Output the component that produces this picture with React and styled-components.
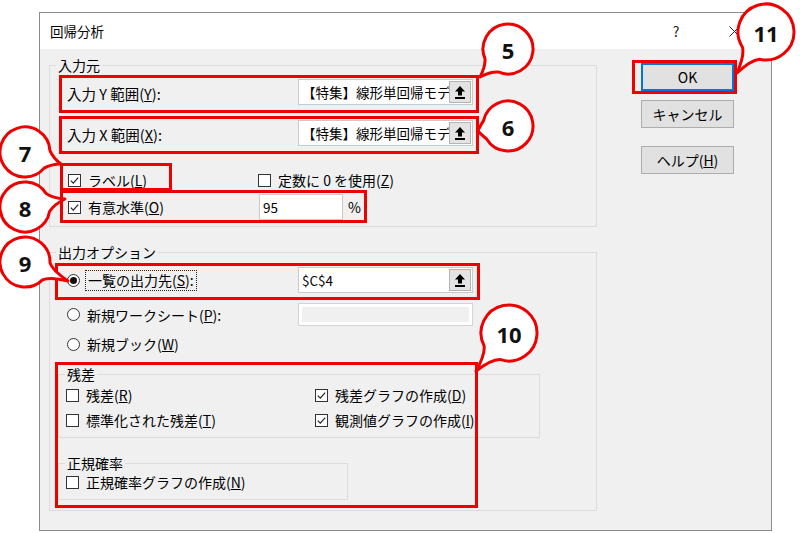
import React from 'react';
import styled, { createGlobalStyle } from 'styled-components';

const Global = createGlobalStyle`
  html, body { margin: 0; padding: 0; background: #fff; }
  body {
    font-family: "Noto Sans CJK JP", "Noto Sans", sans-serif;
    font-size: 14px;
    color: #000;
  }
  #root { position: relative; width: 800px; height: 533px; overflow: hidden; }
`;

const Page = styled.div`
  padding: 12px 0 0 39px;
`;

const Dialog = styled.div`
  width: 733px;
  height: 519px;
  box-sizing: border-box;
  border: 1px solid #8c8c8c;
  background: #f0f0f0;
  display: flex;
  flex-direction: column;
`;

const TitleBar = styled.div`
  height: 36px;
  flex: none;
  background: #fff;
  display: flex;
  align-items: center;
  padding-left: 10px;
  font-size: 13.5px;
`;

const TitleTools = styled.div`
  margin-left: auto;
  display: flex;
  gap: 12px;
  padding-right: 14px;
`;

const ToolGlyph = styled.span`
  width: 46px;
  display: flex;
  align-items: center;
  justify-content: center;
  font-size: 14px;
  color: #222;
`;

const Body = styled.div`
  flex: 1;
  display: flex;
  padding: 7px 0 0 9px;
`;

const LeftCol = styled.div`
  width: 548px;
  display: flex;
  flex-direction: column;
`;

const RightCol = styled.div`
  margin-left: 44px;
  padding-top: 7px;
  display: flex;
  flex-direction: column;
`;

const Group = styled.fieldset`
  margin: ${(p) => p.$mt || 0}px 0 0 ${(p) => p.$ml || 0}px;
  padding: 0 0 ${(p) => p.$pb || 0}px;
  width: ${(p) => p.$w}px;
  box-sizing: border-box;
  min-width: 0;
  border: 1px solid #dcdcdc;
`;

const Legend = styled.legend`
  margin-left: 6px;
  padding: 0 2px;
  line-height: 18px;
  font-size: 14px;
`;

const Row = styled.div`
  display: flex;
  align-items: center;
  height: ${(p) => p.$h || 20}px;
  margin-top: ${(p) => p.$mt || 0}px;
  padding-left: ${(p) => p.$pl || 0}px;
`;

const FieldLabel = styled.span`
  width: ${(p) => p.$w}px;
  flex: none;
  padding-top: 3px;
  white-space: nowrap;
  font-size: 14.5px;
`;

const Cell = styled.div`
  width: ${(p) => p.$w}px;
  flex: none;
  display: flex;
  align-items: center;
`;

const Edit = styled.div`
  width: ${(p) => p.$w}px;
  height: ${(p) => p.$h || 26}px;
  box-sizing: border-box;
  flex: none;
  display: flex;
  align-items: center;
  border: 1px solid ${(p) => (p.$disabled ? '#d4d4d4' : '#cacaca')};
  background: ${(p) => (p.$disabled ? '#f0f0f0' : '#fff')};
  box-shadow: ${(p) => (p.$disabled ? 'inset -3px -3px 0 #fff, inset 3px 3px 0 #fff' : 'none')};
`;

const EditText = styled.span`
  flex: 1;
  padding-left: 3px;
  font-size: 13.5px;
  white-space: nowrap;
  overflow: hidden;
`;

const RefButton = styled.span`
  width: 22px;
  height: 22px;
  margin-right: 1px;
  box-sizing: border-box;
  border: 1px solid #b4b4b4;
  background: #e3e3e3;
  display: flex;
  align-items: center;
  justify-content: center;
`;

const Suffix = styled.span`
  margin-left: 5px;
`;

const Box = styled.span`
  width: 13px;
  height: 13px;
  box-sizing: border-box;
  flex: none;
  border: 1px solid #333;
  background: #fff;
  display: flex;
  align-items: center;
  justify-content: center;
`;

const Round = styled(Box)`
  border-radius: 50%;
`;

const Dot = styled.span`
  width: 7px;
  height: 7px;
  border-radius: 50%;
  background: #111;
`;

const OptionText = styled.span`
  margin-left: ${(p) => p.$gap || 7}px;
  white-space: nowrap;
  ${(p) => p.$focus && 'border: 1px dotted #222; padding: 0 2px; line-height: 19px;'}
`;

const Button = styled.div`
  width: 93px;
  height: 28px;
  box-sizing: border-box;
  margin-top: ${(p) => p.$mt || 0}px;
  border: 1px solid ${(p) => (p.$default ? '#0078d7' : '#adadad')};
  box-shadow: ${(p) => (p.$default ? 'inset 0 0 0 1px #0078d7' : 'none')};
  background: #e1e1e1;
  display: flex;
  align-items: center;
  justify-content: center;
  font-size: 14px;
`;

const Overlay = styled.svg`
  position: absolute;
  left: 0;
  top: 0;
  pointer-events: none;
`;

const Key = ({ children }) => <u>{children}</u>;

function UploadIcon() {
  return (
    <svg width="12" height="15" viewBox="0 0 12 15">
      <polygon points="6,1 11,6.5 8,6.5 8,10.5 4,10.5 4,6.5 1,6.5" fill="#000" />
      <rect x="1" y="12" width="10" height="2" fill="#000" />
    </svg>
  );
}

function CloseIcon() {
  return (
    <svg width="11" height="11" viewBox="0 0 11 11">
      <path d="M0.5 0.5 L10.5 10.5 M10.5 0.5 L0.5 10.5" stroke="#222" strokeWidth="1" />
    </svg>
  );
}

function CheckMark() {
  return (
    <svg width="11" height="11" viewBox="0 0 11 11">
      <path d="M1.8 5.6 L4.3 8.1 L9.2 2.6" fill="none" stroke="#222" strokeWidth="1.2" />
    </svg>
  );
}

function Check({ checked, children }) {
  return (
    <>
      <Box>{checked && <CheckMark />}</Box>
      <OptionText>{children}</OptionText>
    </>
  );
}

function Radio({ selected, focus, children }) {
  return (
    <>
      <Round>{selected && <Dot />}</Round>
      <OptionText $gap={focus ? 5 : 7} $focus={focus}>
        {children}
      </OptionText>
    </>
  );
}

function RangeEdit({ value }) {
  return (
    <Edit $w={175}>
      <EditText>{value}</EditText>
      <RefButton>
        <UploadIcon />
      </RefButton>
    </Edit>
  );
}

// speech-bubble callouts: circle with a tail toward the marked control
const callouts = [
  { n: '5', cx: 508, cy: 49, r: 25, tx: 480, ty: 77 },
  { n: '6', cx: 508, cy: 126, r: 25, tx: 478, ty: 131 },
  { n: '7', cx: 25, cy: 152, r: 25, tx: 61, ty: 164 },
  { n: '8', cx: 25, cy: 207, r: 25, tx: 65, ty: 199 },
  { n: '9', cx: 25, cy: 262, r: 25, tx: 68, ty: 281 },
  { n: '10', cx: 509, cy: 333, r: 28, tx: 476, ty: 371 },
  { n: '11', cx: 766, cy: 32, r: 28, tx: 737, ty: 73 },
];

const marks = [
  { x: 59, y: 75, w: 420, h: 38 },
  { x: 59, y: 116, w: 420, h: 38 },
  { x: 60, y: 163, w: 112, h: 28 },
  { x: 60, y: 190, w: 307, h: 33 },
  { x: 55, y: 263, w: 425, h: 37 },
  { x: 55, y: 362, w: 423, h: 146 },
  { x: 632, y: 60, w: 105, h: 34 },
];

function bubblePath({ cx, cy, r, tx, ty }) {
  const a = Math.atan2(ty - cy, tx - cx);
  const s = 0.38;
  const pt = (ang, rad) => [cx + rad * Math.cos(ang), cy + rad * Math.sin(ang)];
  const p1 = pt(a - s, r);
  const p2 = pt(a + s, r);
  const c1 = pt(a - s * 0.3, r * 1.15);
  const c2 = pt(a + s * 0.3, r * 1.15);
  const f = (p) => `${p[0].toFixed(2)} ${p[1].toFixed(2)}`;
  return `M ${f(p1)} Q ${f(c1)} ${tx} ${ty} Q ${f(c2)} ${f(p2)} A ${r} ${r} 0 1 1 ${f(p1)} Z`;
}

function Annotations() {
  return (
    <Overlay width="800" height="533" viewBox="0 0 800 533">
      {marks.map((m, i) => (
        <rect
          key={i}
          x={m.x + 1.5}
          y={m.y + 1.5}
          width={m.w - 3}
          height={m.h - 3}
          fill="none"
          stroke="#ee0000"
          strokeWidth="3"
        />
      ))}
      {callouts.map((c) => (
        <g key={c.n}>
          <path d={bubblePath(c)} fill="#fff" stroke="#ee0000" strokeWidth="3" strokeLinejoin="round" />
          <text
            x={c.cx}
            y={c.cy + 1}
            textAnchor="middle"
            dominantBaseline="central"
            fontFamily="'Noto Sans', 'Liberation Sans', sans-serif"
            fontWeight="700"
            fontSize="22"
            fill="#111"
          >
            {c.n}
          </text>
        </g>
      ))}
    </Overlay>
  );
}

export default function App() {
  return (
    <>
      <Global />
      <Page>
        <Dialog>
          <TitleBar>
            回帰分析
            <TitleTools>
              <ToolGlyph>?</ToolGlyph>
              <ToolGlyph>
                <CloseIcon />
              </ToolGlyph>
            </TitleTools>
          </TitleBar>
          <Body>
            <LeftCol>
              <Group $w={548} $pb={6}>
                <Legend>入力元</Legend>
                <Row $h={26} $mt={5} $pl={17}>
                  <FieldLabel $w={231}>
                    入力 Y 範囲(<Key>Y</Key>):
                  </FieldLabel>
                  <RangeEdit value="【特集】線形単回帰モデ" />
                </Row>
                <Row $h={26} $mt={15} $pl={17}>
                  <FieldLabel $w={231}>
                    入力 X 範囲(<Key>X</Key>):
                  </FieldLabel>
                  <RangeEdit value="【特集】線形単回帰モデ" />
                </Row>
                <Row $mt={24} $pl={18}>
                  <Cell $w={190}>
                    <Check checked>
                      ラベル(<Key>L</Key>)
                    </Check>
                  </Cell>
                  <Cell>
                    <Check>
                      定数に 0 を使用(<Key>Z</Key>)
                    </Check>
                  </Cell>
                </Row>
                <Row $h={26} $mt={4} $pl={18}>
                  <Cell $w={191}>
                    <Check checked>
                      有意水準(<Key>O</Key>)
                    </Check>
                  </Cell>
                  <Edit $w={84}>
                    <EditText>95</EditText>
                  </Edit>
                  <Suffix>%</Suffix>
                </Row>
              </Group>

              <Group $w={548} $mt={16} $pb={10}>
                <Legend>出力オプション</Legend>
                <Row $h={26} $mt={6} $pl={17}>
                  <Cell $w={231}>
                    <Radio selected focus>
                      一覧の出力先(<Key>S</Key>):
                    </Radio>
                  </Cell>
                  <Edit $w={175}>
                    <EditText>$C$4</EditText>
                    <RefButton>
                      <UploadIcon />
                    </RefButton>
                  </Edit>
                </Row>
                <Row $h={23} $mt={10} $pl={17}>
                  <Cell $w={231}>
                    <Radio>
                      新規ワークシート(<Key>P</Key>):
                    </Radio>
                  </Cell>
                  <Edit $w={175} $h={23} $disabled />
                </Row>
                <Row $mt={8} $pl={17}>
                  <Radio>
                    新規ブック(<Key>W</Key>)
                  </Radio>
                </Row>

                <Group $w={482} $mt={11} $ml={8} $pb={7}>
                  <Legend>残差</Legend>
                  <Row $mt={2} $pl={7}>
                    <Cell $w={249}>
                      <Check>
                        残差(<Key>R</Key>)
                      </Check>
                    </Cell>
                    <Cell>
                      <Check checked>
                        残差グラフの作成(<Key>D</Key>)
                      </Check>
                    </Cell>
                  </Row>
                  <Row $mt={5} $pl={7}>
                    <Cell $w={249}>
                      <Check>
                        標準化された残差(<Key>T</Key>)
                      </Check>
                    </Cell>
                    <Cell>
                      <Check checked>
                        観測値グラフの作成(<Key>I</Key>)
                      </Check>
                    </Cell>
                  </Row>
                </Group>

                <Group $w={290} $mt={16} $ml={8} $pb={7}>
                  <Legend>正規確率</Legend>
                  <Row $pl={7}>
                    <Check>
                      正規確率グラフの作成(<Key>N</Key>)
                    </Check>
                  </Row>
                </Group>
              </Group>
            </LeftCol>

            <RightCol>
              <Button $default>OK</Button>
              <Button $mt={9}>キャンセル</Button>
              <Button $mt={18}>
                ヘルプ(<Key>H</Key>)
              </Button>
            </RightCol>
          </Body>
        </Dialog>
      </Page>
      <Annotations />
    </>
  );
}
